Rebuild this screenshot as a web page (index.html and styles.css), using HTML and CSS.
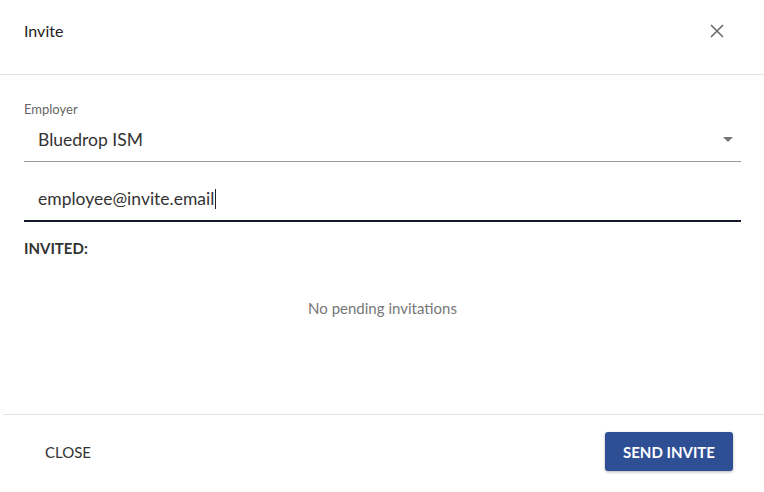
FILE: index.html
```html
<!DOCTYPE html>
<html>
<head>
<meta charset="utf-8">
<link rel="stylesheet" href="styles.css">
</head>
<body>
<div class="dialog">
  <header class="header">
    <h1 class="title">Invite</h1>
    <button class="close-icon" aria-label="Close">
      <svg width="14" height="14" viewBox="0 0 14 14"><path d="M1 1L13 13M13 1L1 13" stroke="#6b6b6b" stroke-width="1.6" fill="none"/></svg>
    </button>
  </header>
  <main class="content">
    <label class="label">Employer</label>
    <div class="select">
      <span class="select-value">Bluedrop ISM</span>
      <span class="arrow"></span>
    </div>
    <div class="input">
      <span class="input-value">employee@invite.email</span><span class="caret"></span>
    </div>
    <div class="invited">INVITED:</div>
    <div class="empty">No pending invitations</div>
  </main>
  <footer class="footer">
    <button class="btn-text">CLOSE</button>
    <button class="btn-primary">SEND INVITE</button>
  </footer>
</div>
</body>
</html>
```
FILE: styles.css
```css
* { box-sizing: border-box; }
html, body { margin: 0; padding: 0; background: #fff; }
body { font-family: Lato, "Open Sans", sans-serif; color: #333; }
.dialog { width: 764px; height: 492px; display: flex; flex-direction: column; }
.header {
  height: 75px;
  padding: 0 40px 13px 24px;
  display: flex;
  align-items: center;
  justify-content: space-between;
  border-bottom: 1px solid #e3e3e3;
}
.title { margin: 0; font-size: 16px; font-weight: 400; color: #222; line-height: 18px; }
.close-icon { border: 0; background: none; padding: 0; width: 14px; height: 14px; display: flex; cursor: pointer; }
.content { padding: 27px 23px 0 24px; flex: 1; display: flex; flex-direction: column; }
.label { display: block; font-size: 13px; line-height: 14px; color: #666; }
.select {
  height: 46px;
  padding: 14px 8px 0 14px;
  border-bottom: 1px solid #9a9a9a;
  display: flex;
  justify-content: space-between;
}
.select-value { font-size: 17.5px; line-height: 20px; color: #333; }
.arrow {
  width: 0; height: 0; margin-top: 7px;
  border-left: 5px solid transparent;
  border-right: 5px solid transparent;
  border-top: 5px solid #757575;
}
.input {
  height: 60px;
  padding: 27px 14px 0 14px;
  border-bottom: 2px solid #141a2a;
  display: flex;
}
.input-value { font-size: 17.5px; line-height: 20px; color: #333; }
.caret { width: 1px; height: 20px; background: #222; margin-left: 1px; }
.invited { margin-top: 17px; font-size: 15px; line-height: 18px; font-weight: 700; color: #333; }
.empty { margin-top: 42px; text-align: center; font-size: 15px; line-height: 18px; color: #777; }
.footer {
  height: 78px;
  margin-left: 3px;
  border-top: 1px solid #e3e3e3;
  padding: 17px 31px 0 21px;
  display: flex;
  justify-content: space-between;
  align-items: flex-start;
}
.btn-text {
  border: 0; background: none; font-family: inherit;
  font-size: 15px; color: #333; height: 39px; padding: 0 21px;
}
.btn-primary {
  border: 0; font-family: inherit;
  background: #2f4f95; color: #fff;
  font-size: 15px; font-weight: 700;
  height: 39px; width: 128px; border-radius: 3px;
  box-shadow: 0 1px 3px rgba(0,0,0,0.3);
}
```
